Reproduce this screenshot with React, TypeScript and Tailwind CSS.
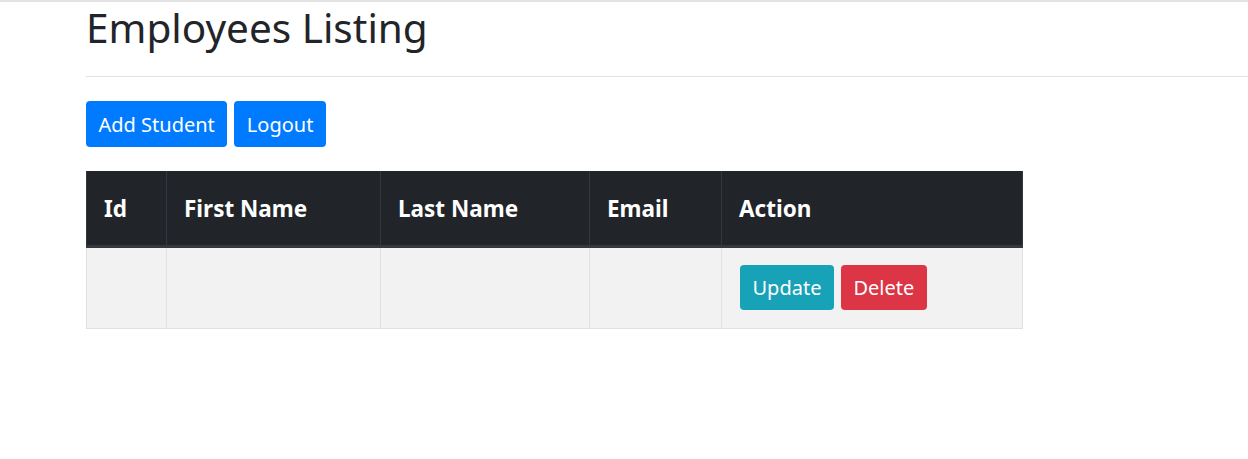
const columns = [
  { label: 'Id', width: 'w-[80px]' },
  { label: 'First Name', width: 'w-[214px]' },
  { label: 'Last Name', width: 'w-[209px]' },
  { label: 'Email', width: 'w-[132px]' },
  { label: 'Action', width: 'w-[301px]' },
];

export default function App() {
  return (
    <div
      className="min-h-[459px] bg-white border-t-2 border-[#e3e3e3] text-[#212529]"
      style={{ fontFamily: '"Noto Sans", sans-serif' }}
    >
      <div className="pl-[86px]">
        <h1 className="mt-[2px] text-[40.5px] leading-[48px] font-normal">Employees Listing</h1>
        <hr className="mt-[24px] border-0 border-t border-[#e2e2e2]" />

        <div className="mt-[24px] flex gap-[7px]">
          <button className="h-[46px] px-[12.5px] pt-px rounded-[4px] bg-[#007bff] text-white text-[20px]">Add Student</button>
          <button className="h-[46px] px-[12.5px] pt-px rounded-[4px] bg-[#007bff] text-white text-[20px]">Logout</button>
        </div>

        <table className="mt-[24px] w-[936px] border-collapse table-fixed">
          <thead>
            <tr className="h-[75px] bg-[#212529] border-b-[3px] border-[#32383e]">
              {columns.map((c) => (
                <th
                  key={c.label}
                  className={`${c.width} pl-[17px] pt-[3px] text-left text-white text-[22.5px] font-bold border-x border-[#32383e]`}
                >
                  {c.label}
                </th>
              ))}
            </tr>
          </thead>
          <tbody>
            <tr className="h-[82px] bg-[#f2f2f2]">
              <td className="border border-[#dee2e6]"></td>
              <td className="border border-[#dee2e6]"></td>
              <td className="border border-[#dee2e6]"></td>
              <td className="border border-[#dee2e6]"></td>
              <td className="border border-[#dee2e6] pl-[18px]">
                <div className="flex gap-[7px] -mt-px">
                  <button className="h-[45px] px-[12.5px] pt-px rounded-[4px] bg-[#17a2b8] text-white text-[20px]">Update</button>
                  <button className="h-[45px] px-[12.5px] pt-px rounded-[4px] bg-[#dc3545] text-white text-[20px]">Delete</button>
                </div>
              </td>
            </tr>
          </tbody>
        </table>
      </div>
    </div>
  );
}
